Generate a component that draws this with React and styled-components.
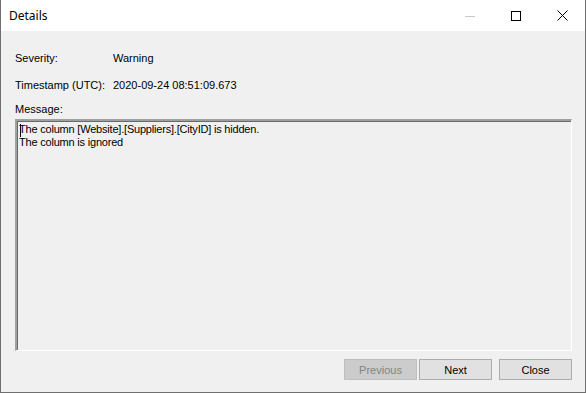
import React from 'react'
import styled, { createGlobalStyle } from 'styled-components'

const Global = createGlobalStyle`
    body {
        margin: 0;
        background: #ffffff;
    }
`
const Window = styled.div`
    width: 586px;
    height: 393px;
    box-sizing: border-box;
    border: 1px solid #6f6f6f;
    border-top: none;
    display: flex;
    flex-direction: column;
    background: #f0f0f0;
    font-family: "Liberation Sans", Arial, sans-serif;
    font-size: 11px;
    color: #000;
`
const TitleBar = styled.div`
    height: 31px;
    background: #ffffff;
    display: flex;
    align-items: center;
`
const Title = styled.div`
    flex: 1;
    padding-left: 8px;
    font-family: "Noto Sans", "Open Sans", sans-serif;
    font-size: 12px;
    padding-bottom: 1px;
`
const CaptionButton = styled.div`
    width: 46px;
    height: 31px;
    display: flex;
    align-items: center;
    justify-content: center;
`
const Body = styled.div`
    flex: 1;
    display: flex;
    flex-direction: column;
    padding: 21px 13px 12px 14px;
`
const Row = styled.div`
    display: flex;
    height: 13px;
    line-height: 13px;
    margin-bottom: ${props => props.gap || 0}px;
`
const Label = styled.div`
    width: 98px;
`
const Value = styled.div``
const MessageBox = styled.div`
    flex: 1;
    margin-top: 3px;
    box-sizing: border-box;
    border-top: 2px solid #a0a0a0;
    border-left: 2px solid #a0a0a0;
    border-right: 1px solid #ffffff;
    border-bottom: 1px solid #ffffff;
    box-shadow: inset 1px 1px 0 #696969;
    padding: 2px 2px;
    line-height: 13px;
    letter-spacing: -0.2px;
    position: relative;
`
const Caret = styled.span`
    position: absolute;
    left: 3px;
    top: 3px;
    width: 1px;
    height: 13px;
    background: #000;
`
const ButtonRow = styled.div`
    display: flex;
    justify-content: flex-end;
    margin-top: 8px;
`
const Button = styled.div`
    width: 73px;
    height: 21px;
    box-sizing: border-box;
    border: 1px solid ${props => props.disabled ? '#bfbfbf' : '#adadad'};
    background: ${props => props.disabled ? '#cccccc' : '#e1e1e1'};
    color: ${props => props.disabled ? '#838383' : '#000'};
    display: flex;
    align-items: center;
    justify-content: center;
    margin-left: ${props => props.gap}px;
`

const App = () => {
    return (
        <Window>
            <Global />
            <TitleBar>
                <Title>Details</Title>
                <CaptionButton>
                    <svg width="10" height="10" viewBox="0 0 10 10">
                        <line x1="0" y1="5.5" x2="10" y2="5.5" stroke="#c8c8c8" strokeWidth="1" />
                    </svg>
                </CaptionButton>
                <CaptionButton>
                    <svg width="10" height="10" viewBox="0 0 10 10">
                        <rect x="0.5" y="0.5" width="9" height="9" fill="none" stroke="#000" strokeWidth="1" />
                    </svg>
                </CaptionButton>
                <CaptionButton>
                    <svg width="11" height="11" viewBox="0 0 11 11">
                        <path d="M0.5 0.5 L10.5 10.5 M10.5 0.5 L0.5 10.5" stroke="#000" strokeWidth="1" />
                    </svg>
                </CaptionButton>
            </TitleBar>
            <Body>
                <Row gap={14}>
                    <Label>Severity:</Label>
                    <Value>Warning</Value>
                </Row>
                <Row gap={11}>
                    <Label>Timestamp (UTC):</Label>
                    <Value>2020-09-24 08:51:09.673</Value>
                </Row>
                <Row>
                    <Label>Message:</Label>
                </Row>
                <MessageBox>
                    <Caret />
                    The column [Website].[Suppliers].[CityID] is hidden.<br />
                    The column is ignored
                </MessageBox>
                <ButtonRow>
                    <Button disabled>Previous</Button>
                    <Button gap={2}>Next</Button>
                    <Button gap={7}>Close</Button>
                </ButtonRow>
            </Body>
        </Window>
    )
}

export default App
